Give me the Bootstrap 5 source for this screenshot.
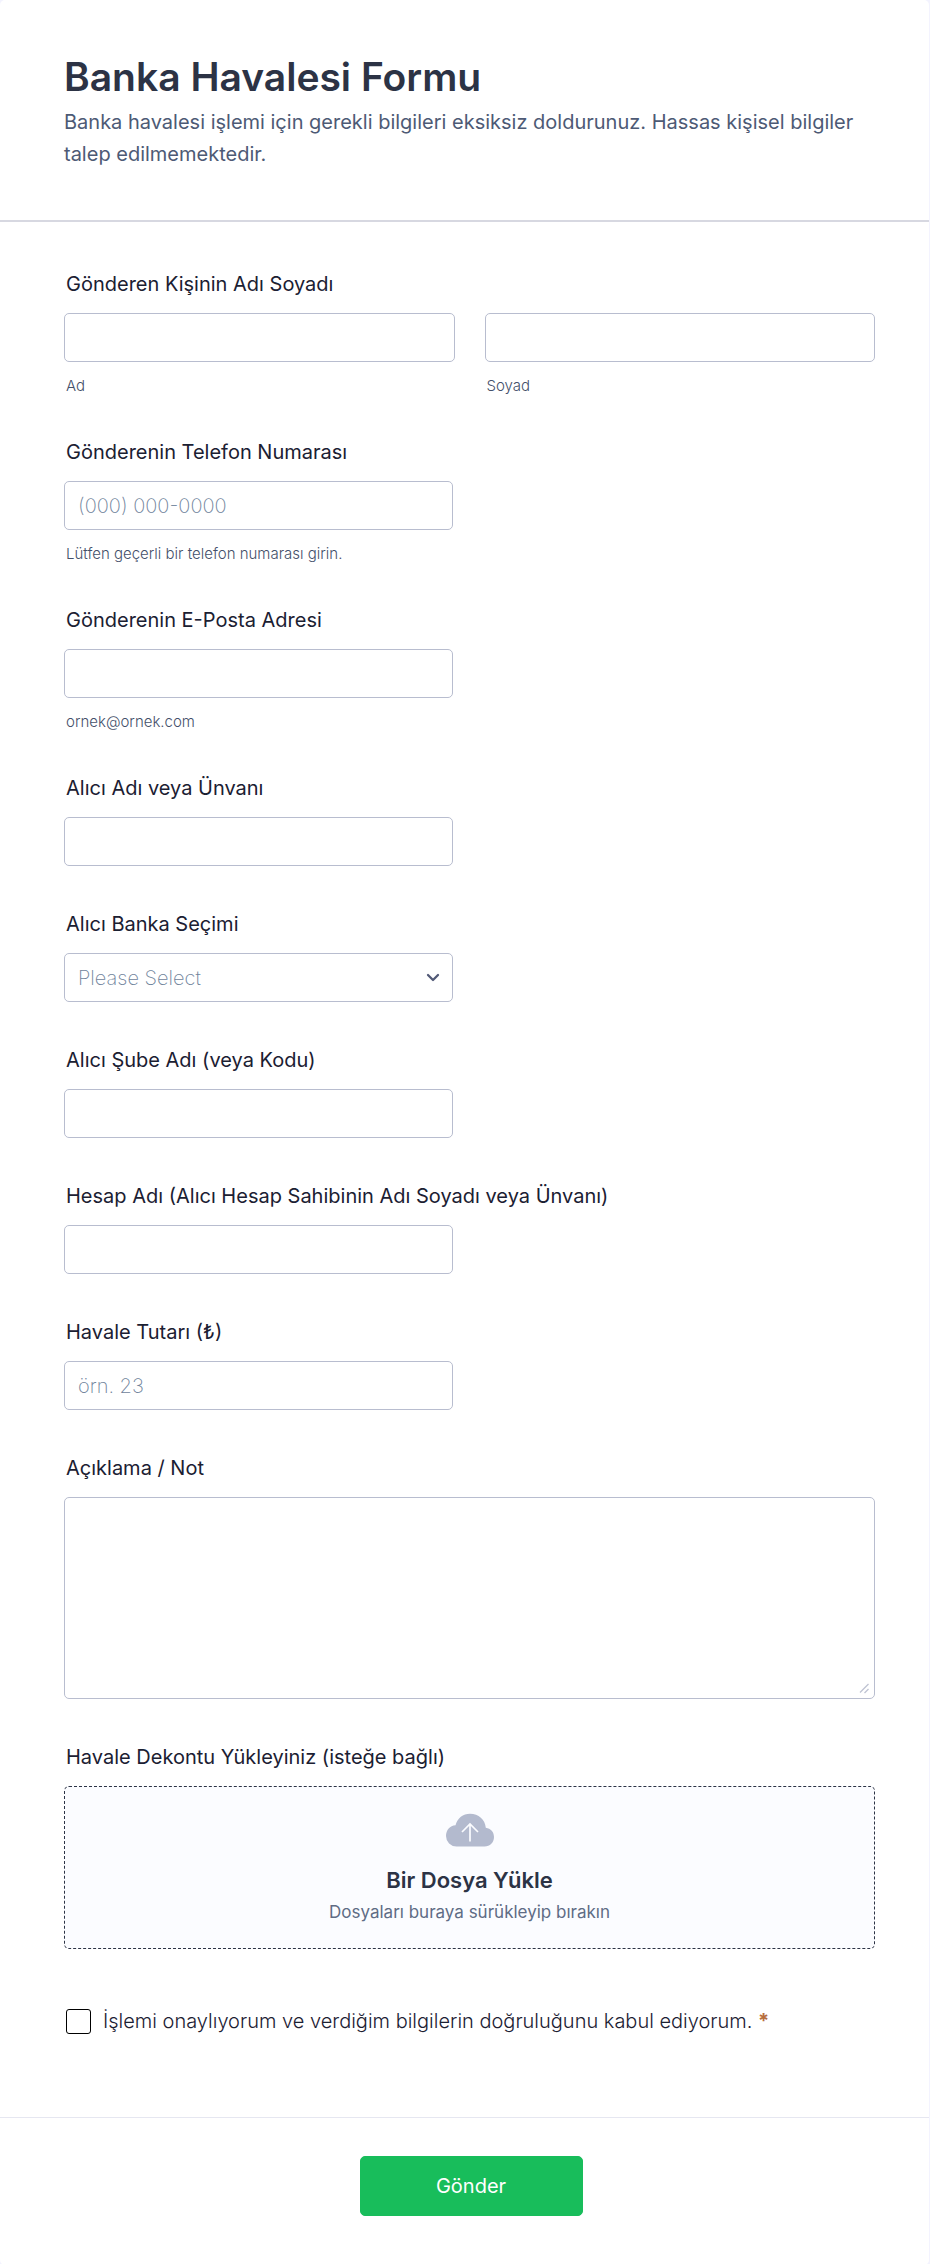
<!DOCTYPE html>
<html lang="tr">
<head>
<meta charset="utf-8">
<meta name="viewport" content="width=device-width, initial-scale=1">
<title>Banka Havalesi Formu</title>
<link href="https://cdn.jsdelivr.net/npm/bootstrap@5.3.0/dist/css/bootstrap.min.css" rel="stylesheet">
<style>
  :root { --ink: #2c3345; --deep-ink: #1b2032; --muted-ink: #4d5a75; --hint-ink: #44506a; --placeholder: #6f839b; --line: #b8bdcf; }
  body { font-family: Inter, "Liberation Sans", sans-serif; color: var(--ink); background: #f3f3fe; }
  .sheet { background: #fff; border-radius: 5px; margin-right: 1px; }
  .sheet-header { padding: 52px 64px 50px; border-bottom: 2px solid #d7d8e1; }
  .sheet-title { font-size: 39px; font-weight: 600; line-height: 50px; margin: 0; }
  .sheet-lead { font-size: 20px; font-weight: 400; line-height: 32px; color: var(--muted-ink); margin: 4px 0 0; }
  .sheet-body { padding: 50px 54px 83px 64px; }
  .field { margin-bottom: 46px; }
  .field .form-label { display: block; font-size: 20px; font-weight: 400; line-height: 24px; color: var(--deep-ink); margin: 0 0 17px; padding: 0 2px; }
  .field .form-text { display: block; font-size: 15px; font-weight: 300; line-height: 17px; color: var(--hint-ink); margin: 15px 0 0; padding: 0 2px; }
  .field .form-control, .field .form-select { font-size: 20px; font-weight: 200; line-height: 25px; color: var(--ink); padding: 12px 13px 10px; border: 1px solid var(--line); border-radius: 5px; background-color: #fff; }
  .field .form-control::placeholder { color: var(--placeholder); opacity: 1; }
  .field .form-select { color: var(--placeholder); background-image: url("data:image/svg+xml,%3Csvg xmlns='http://www.w3.org/2000/svg' viewBox='0 0 14 10'%3E%3Cpath d='M2 2 7 7l5-5' fill='none' stroke='%23525a77' stroke-width='2.300' stroke-linecap='round' stroke-linejoin='round'/%3E%3C/svg%3E"); background-size: 14px 10px; background-position: right 12px center; }
  .narrow { width: 48%; }
  .name-row { --bs-gutter-x: 30px; }
  .field .note-box { height: 202px; }
  .note-box::-webkit-resizer { background: url("data:image/svg+xml,%3Csvg xmlns='http://www.w3.org/2000/svg' viewBox='0 0 15 15'%3E%3Cpath d='M1 9.500 9.500 1M5.500 10 9.500 6' fill='none' stroke='%23bfc3d3' stroke-width='1.300'/%3E%3C/svg%3E") center / 15px 15px no-repeat; }
  .drop-zone { border: 1px dashed var(--ink); border-radius: 5px; background: #fbfcff; padding: 26px 16px 24px; line-height: 28px; cursor: pointer; }
  .drop-title { font-size: 22px; font-weight: 600; margin-top: 19px; }
  .drop-hint { font-size: 17px; line-height: 24px; color: #5f6c85; margin-top: 6px; }
  .consent { margin-top: 60px; padding: 0 2px; }
  .consent .form-check-input { width: 25px; height: 25px; margin: 0; border: 1px solid #000; border-radius: 3px; }
  .consent .form-check-label { font-size: 20px; font-weight: 300; line-height: 25px; color: var(--deep-ink); margin-left: 12px; }
  .required-mark { color: #b86e3e; font-weight: 700; }
  .sheet-footer { border-top: 1px solid #e6e7f1; padding: 38px 51px 49px 64px; }
  .btn-send { --bs-btn-color: #fff; --bs-btn-bg: #18bd5b; --bs-btn-border-color: #18bd5b; --bs-btn-hover-color: #fff; --bs-btn-hover-bg: #16aa52; --bs-btn-hover-border-color: #16aa52; --bs-btn-border-radius: 5px; font-size: 20px; font-weight: 400; line-height: 24px; padding: 17px 24px; min-width: 223px; }
</style>
</head>
<body>
<form class="sheet">
  <header class="sheet-header">
    <h1 class="sheet-title">Banka Havalesi Formu</h1>
    <p class="sheet-lead">Banka havalesi işlemi için gerekli bilgileri eksiksiz doldurunuz. Hassas kişisel bilgiler talep edilmemektedir.</p>
  </header>

  <div class="sheet-body">
    <div class="field" role="group" aria-labelledby="senderLabel">
      <label class="form-label" id="senderLabel" for="firstName">Gönderen Kişinin Adı Soyadı</label>
      <div class="row name-row">
        <div class="col-6">
          <input type="text" class="form-control" id="firstName">
          <label class="form-text" for="firstName">Ad</label>
        </div>
        <div class="col-6">
          <input type="text" class="form-control" id="lastName">
          <label class="form-text" for="lastName">Soyad</label>
        </div>
      </div>
    </div>

    <div class="field">
      <label class="form-label" for="phone">Gönderenin Telefon Numarası</label>
      <input type="tel" class="form-control narrow" id="phone" placeholder="(000) 000-0000" aria-describedby="phoneHelp">
      <div class="form-text" id="phoneHelp">Lütfen geçerli bir telefon numarası girin.</div>
    </div>

    <div class="field">
      <label class="form-label" for="email">Gönderenin E-Posta Adresi</label>
      <input type="email" class="form-control narrow" id="email" aria-describedby="emailHelp">
      <div class="form-text" id="emailHelp">ornek@ornek.com</div>
    </div>

    <div class="field">
      <label class="form-label" for="receiver">Alıcı Adı veya Ünvanı</label>
      <input type="text" class="form-control narrow" id="receiver">
    </div>

    <div class="field">
      <label class="form-label" for="bank">Alıcı Banka Seçimi</label>
      <select class="form-select narrow" id="bank">
        <option value="" selected>Please Select</option>
      </select>
    </div>

    <div class="field">
      <label class="form-label" for="branch">Alıcı Şube Adı (veya Kodu)</label>
      <input type="text" class="form-control narrow" id="branch">
    </div>

    <div class="field">
      <label class="form-label" for="account">Hesap Adı (Alıcı Hesap Sahibinin Adı Soyadı veya Ünvanı)</label>
      <input type="text" class="form-control narrow" id="account">
    </div>

    <div class="field">
      <label class="form-label" for="amount">Havale Tutarı (₺)</label>
      <input type="text" inputmode="decimal" class="form-control narrow" id="amount" placeholder="örn. 23">
    </div>

    <div class="field">
      <label class="form-label" for="note">Açıklama / Not</label>
      <textarea class="form-control note-box d-block" id="note"></textarea>
    </div>

    <div class="field">
      <label class="form-label" for="receipt">Havale Dekontu Yükleyiniz (isteğe bağlı)</label>
      <label class="drop-zone d-flex flex-column align-items-center text-center" for="receipt">
        <svg width="48" height="34" viewBox="0 0 48 34" aria-hidden="true">
          <path d="M10.500 33.500A10.500 10.500 0 0 1 0 23C0 17 4 12.600 9.500 12.200 11.400 5.200 17 .8 24 .8c8.600 0 15.200 5.800 15.800 14C44.800 15.500 48 19 48 24c0 5.600-4 9.500-9.500 9.500z" fill="#b3bace"/>
          <path d="M24 28.500V11.500M16 19l8-8 8 8" fill="none" stroke="#fbfcff" stroke-width="1.700"/>
        </svg>
        <span class="drop-title">Bir Dosya Yükle</span>
        <span class="drop-hint">Dosyaları buraya sürükleyip bırakın</span>
      </label>
      <input type="file" class="visually-hidden" id="receipt">
    </div>

    <div class="consent d-flex align-items-center">
      <input type="checkbox" class="form-check-input flex-shrink-0" id="consent" required>
      <label class="form-check-label" for="consent">İşlemi onaylıyorum ve verdiğim bilgilerin doğruluğunu kabul ediyorum. <span class="required-mark">*</span></label>
    </div>
  </div>

  <footer class="sheet-footer text-center">
    <button type="submit" class="btn btn-send">Gönder</button>
  </footer>
</form>
<script src="https://cdn.jsdelivr.net/npm/bootstrap@5.3.0/dist/js/bootstrap.bundle.min.js"></script>
</body>
</html>
